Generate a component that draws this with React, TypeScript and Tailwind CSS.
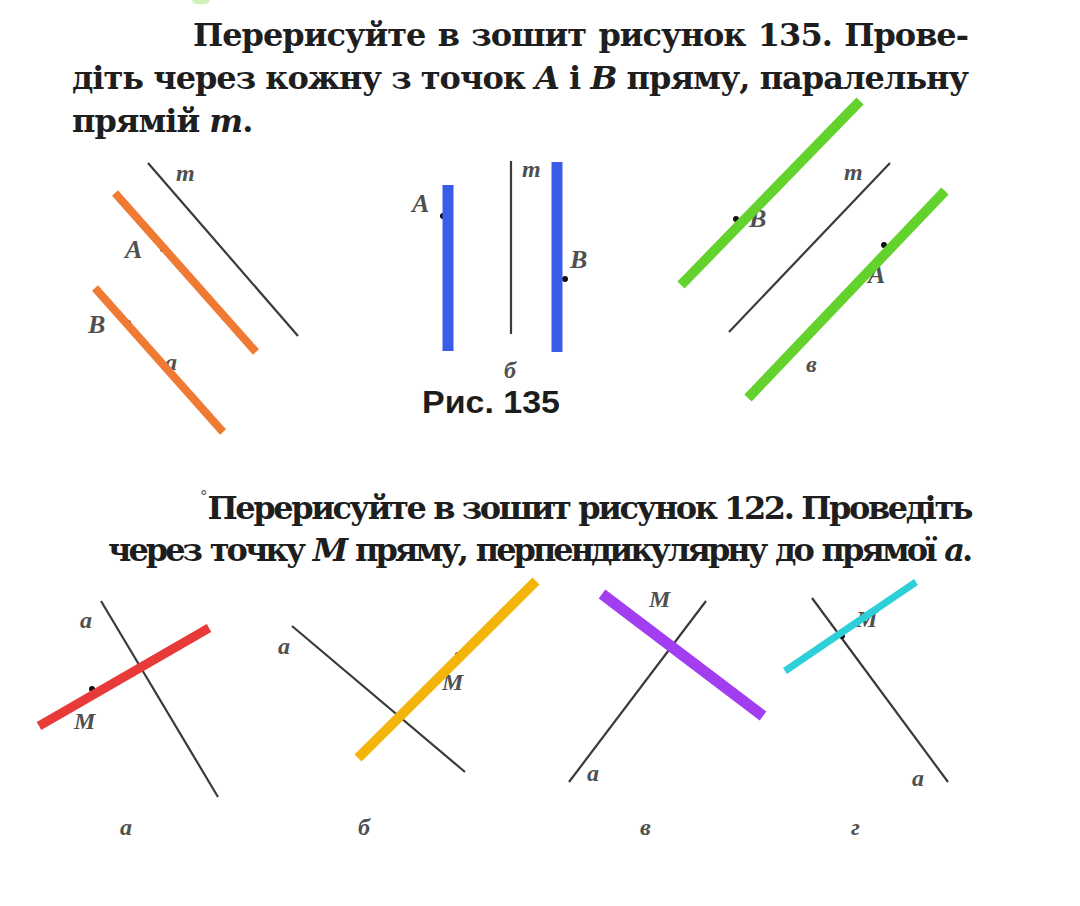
import React from 'react';

type Seg = { x1: number; y1: number; x2: number; y2: number };
type Label = { x: number; y: number; t: string; size?: number };

const ink = '#3a3a3a';
const labelFill = '#505050';

const Line: React.FC<Seg & { color?: string; w?: number }> = ({ x1, y1, x2, y2, color = ink, w = 2.2 }) => (
  <line x1={x1} y1={y1} x2={x2} y2={y2} stroke={color} strokeWidth={w} strokeLinecap="butt" />
);

const Labels: React.FC<{ items: Label[] }> = ({ items }) => (
  <>
    {items.map((l, i) => (
      <text
        key={i}
        x={l.x}
        y={l.y}
        fontFamily="'Liberation Serif', serif"
        fontStyle="italic"
        fontWeight={600}
        fontSize={l.size ?? 26}
        fill={labelFill}
      >
        {l.t}
      </text>
    ))}
  </>
);

const Dot: React.FC<{ x: number; y: number }> = ({ x, y }) => <circle cx={x} cy={y} r={3} fill="#111" />;

const Figure135: React.FC = () => (
  <svg viewBox="0 143 1080 307" className="block w-[1080px] h-[307px] overflow-visible">
    {/* a */}
    <Line x1={148} y1={163} x2={298} y2={336} />
    <Labels
      items={[
        { x: 176, y: 181, t: 'm', size: 24 },
        { x: 125, y: 258, t: 'A' },
        { x: 88, y: 333, t: 'B' },
        { x: 165, y: 370, t: 'a', size: 24 },
      ]}
    />
    <Dot x={163} y={249} />
    <Dot x={128} y={323} />
    <Line x1={115} y1={193} x2={256} y2={352} color="#ee7a33" w={8} />
    <Line x1={95} y1={288} x2={223} y2={432} color="#ee7a33" w={8} />

    {/* б */}
    <Line x1={511} y1={161} x2={511} y2={334} />
    <Labels
      items={[
        { x: 412, y: 212, t: 'A' },
        { x: 522, y: 177, t: 'm', size: 24 },
        { x: 570, y: 268, t: 'B' },
        { x: 504, y: 378, t: 'б', size: 24 },
      ]}
    />
    <Dot x={443} y={216} />
    <Dot x={565} y={279} />
    <Line x1={448} y1={185} x2={448} y2={351} color="#3a5ce8" w={11} />
    <Line x1={557} y1={162} x2={557} y2={352} color="#3a5ce8" w={11} />
    <text
      x={422}
      y={413}
      fontFamily="'Liberation Sans', Arial, sans-serif"
      fontWeight="bold"
      fontSize={31}
      textLength={138}
      lengthAdjust="spacingAndGlyphs"
      fill="#1c1c1c"
    >
      Рис. 135
    </text>

    {/* в */}
    <Line x1={729} y1={332} x2={890} y2={163} />
    <Labels
      items={[
        { x: 844, y: 180, t: 'm', size: 24 },
        { x: 749, y: 227, t: 'B' },
        { x: 868, y: 283, t: 'A' },
        { x: 806, y: 372, t: 'в', size: 24 },
      ]}
    />
    <Dot x={736} y={219} />
    <Dot x={884} y={245} />
    <Line x1={681} y1={285} x2={860} y2={101} color="#64d22c" w={10} />
    <Line x1={748} y1={398} x2={945} y2={191} color="#64d22c" w={10} />
  </svg>
);

const Figure122: React.FC = () => (
  <svg viewBox="0 571 1080 335" className="block w-[1080px] h-[335px] overflow-visible">
    {/* а */}
    <Line x1={101} y1={601} x2={218} y2={797} />
    <Labels
      items={[
        { x: 80, y: 628, t: 'a', size: 24 },
        { x: 74, y: 729, t: 'M', size: 24 },
        { x: 120, y: 835, t: 'а', size: 24 },
      ]}
    />
    <Dot x={92} y={689} />
    <Line x1={39} y1={726} x2={209} y2={628} color="#e83a38" w={9} />

    {/* б */}
    <Line x1={292} y1={626} x2={465} y2={772} />
    <Labels
      items={[
        { x: 278, y: 654, t: 'a', size: 24 },
        { x: 442, y: 690, t: 'M', size: 24 },
        { x: 358, y: 835, t: 'б', size: 24 },
      ]}
    />
    <Dot x={458} y={655} />
    <Line x1={358} y1={758} x2={536} y2={581} color="#f4b50a" w={10} />

    {/* в */}
    <Line x1={569} y1={782} x2={706} y2={601} />
    <Labels
      items={[
        { x: 587, y: 781, t: 'a', size: 24 },
        { x: 649, y: 607, t: 'M', size: 24 },
        { x: 640, y: 835, t: 'в', size: 24 },
      ]}
    />
    <Dot x={637} y={623} />
    <Line x1={602} y1={594} x2={763} y2={716} color="#a33ef0" w={11} />

    {/* г */}
    <Line x1={812} y1={598} x2={948} y2={782} />
    <Labels
      items={[
        { x: 912, y: 786, t: 'a', size: 24 },
        { x: 856, y: 627, t: 'M', size: 24 },
        { x: 851, y: 835, t: 'г', size: 24 },
      ]}
    />
    <Dot x={842} y={636} />
    <Line x1={785} y1={671} x2={916} y2={582} color="#2dd0d8" w={7} />
  </svg>
);

export default function App() {
  return (
    <div className="relative w-[1080px] h-[906px] overflow-hidden bg-white font-['DejaVu_Serif','Liberation_Serif',serif] text-[#1e1e1e]">
      {/* stray marker trace at the top edge */}
      <div className="absolute left-[192px] top-[-6px] h-[10px] w-[18px] rounded-full bg-[#b9ec9a] opacity-70" />

      <div className="w-[968px] pl-[72px] pt-[14px] text-[32px] leading-[43px] font-bold tracking-[-1px] whitespace-nowrap">
        <div className="pl-[121px] text-justify [text-align-last:justify]">
          Перерисуйте в зошит рисунок 135. Прове-
        </div>
        <div className="text-justify [text-align-last:justify]">
          діть через кожну з точок <i>A</i> і <i>B</i> пряму, паралельну
        </div>
        <div>
          прямій <i>m</i>.
        </div>
      </div>

      <Figure135 />

      <div className="mt-[37px] w-[970px] pl-[108px] text-[32px] leading-[42px] font-bold whitespace-nowrap">
        <div className="flex items-start pl-[92px] tracking-[-2.4px]">
          <span className="w-[19px] text-[15px] leading-[18px] font-normal tracking-normal text-[#555]">°</span>
          <span className="flex-1 text-justify [text-align-last:justify]">
            Перерисуйте в зошит рисунок 122. Проведіть
          </span>
        </div>
        <div className="text-justify [text-align-last:justify] tracking-[-3px]">
          через точку <i>M</i> пряму, перпендикулярну до прямої <i>a</i>.
        </div>
      </div>

      <Figure122 />
    </div>
  );
}
